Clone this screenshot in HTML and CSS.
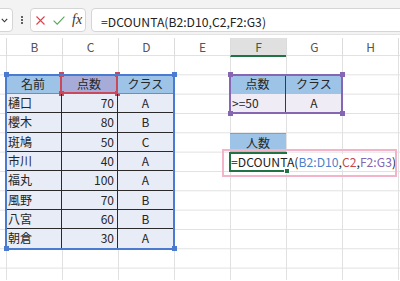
FILE: index.html
```html
<!DOCTYPE html>
<html>
<head>
<meta charset="utf-8">
<link rel="stylesheet" href="styles.css">
</head>
<body>
<div class="topbar">
  <div class="namebox">
    <svg width="7" height="5" viewBox="0 0 7 5"><path d="M0.8 0.8 L3.5 3.8 L6.2 0.8" fill="none" stroke="#333" stroke-width="1.1"/></svg>
  </div>
  <div class="dots"><i></i><i></i><i></i></div>
  <div class="btns">
    <svg class="xicon" width="9" height="9" viewBox="0 0 9 9"><path d="M0.5 0.5 L8.5 8.5 M8.5 0.5 L0.5 8.5" stroke="#d9434c" stroke-width="1.1" fill="none"/></svg>
    <svg class="check" width="12" height="9" viewBox="0 0 12 9"><path d="M0.6 4.6 L4.2 8.2 L11.4 0.6" stroke="#57a85a" stroke-width="1.1" fill="none"/></svg>
    <span class="fx">fx</span>
  </div>
  <div class="formula"><span class="ftext">=DCOUNTA(B2:D10,C2,F2:G3)</span></div>
</div>
<div class="colheads">
  <div class="ch first"></div>
  <div class="ch">B</div>
  <div class="ch">C</div>
  <div class="ch">D</div>
  <div class="ch">E</div>
  <div class="ch sel">F</div>
  <div class="ch">G</div>
  <div class="ch">H</div>
  <div class="ch"></div>
</div>
<div class="sheet">
  <div class="data">
    <div class="c h">名前</div>
    <div class="c h sel-c2">点数<span class="frame red"><i class="tl"></i><i class="tr"></i><i class="bl"></i><i class="br"></i></span></div>
    <div class="c h">クラス</div>
    <div class="c">樋口</div><div class="c num">70</div><div class="c mid">A</div>
    <div class="c">櫻木</div><div class="c num">80</div><div class="c mid">B</div>
    <div class="c">斑鳩</div><div class="c num">50</div><div class="c mid">C</div>
    <div class="c">市川</div><div class="c num">40</div><div class="c mid">A</div>
    <div class="c">福丸</div><div class="c num">100</div><div class="c mid">A</div>
    <div class="c">風野</div><div class="c num">70</div><div class="c mid">B</div>
    <div class="c">八宮</div><div class="c num">60</div><div class="c mid">B</div>
    <div class="c">朝倉</div><div class="c num">30</div><div class="c mid">A</div>
    <span class="frame blue"><i class="tl"></i><i class="tr"></i><i class="bl"></i><i class="br"></i></span>
  </div>
  <div class="crit">
    <div class="k h">点数</div>
    <div class="k h">クラス</div>
    <div class="k v">&gt;=50</div>
    <div class="k v mid">A</div>
    <span class="frame purple"><i class="tl"></i><i class="tr"></i><i class="bl"></i><i class="br"></i></span>
  </div>
  <div class="count">人数</div>
  <div class="edit">
    <span class="active"></span>
    <div class="etext"><span class="ftext">=DCOUNTA(<span class="r1">B2:D10</span>,<span class="r2">C2</span>,<span class="r3">F2:G3</span>)</span></div>
    <span class="handle"></span>
    <span class="pink"></span>
  </div>
</div>
</body>
</html>
```

FILE: styles.css
```css
html, body {
  margin: 0;
  padding: 0;
}
body {
  width: 400px;
  height: 281px;
  overflow: hidden;
  background: #ffffff;
  font-family: "Noto Sans CJK JP", "Noto Sans", sans-serif;
  color: #262626;
}

.ftext {
  font-family: "Noto Sans CJK JP", sans-serif;
  font-size: 12.2px;
  color: #222;
  white-space: nowrap;
}

/* ---------- formula bar ---------- */
.topbar {
  display: flex;
  align-items: flex-start;
  height: 35px;
  box-sizing: border-box;
  padding-top: 8px;
  background: #f3f3f3;
  border-bottom: 1px solid #e4e4e4;
}
.namebox {
  box-sizing: border-box;
  width: 22px;
  height: 24px;
  margin-left: -9px;
  background: #fff;
  border: 1px solid #d5d5d5;
  border-radius: 4px;
  display: flex;
  align-items: center;
  justify-content: flex-end;
  padding-right: 4px;
}
.dots {
  margin-left: 8px;
  width: 2px;
  height: 24px;
  display: flex;
  flex-direction: column;
  justify-content: center;
  gap: 1.5px;
}
.dots i {
  display: block;
  width: 1.6px;
  height: 1.6px;
  background: #444;
  border-radius: 50%;
}
.btns {
  box-sizing: border-box;
  margin-left: 7px;
  width: 56px;
  height: 24px;
  background: #fff;
  border: 1px solid #d5d5d5;
  border-radius: 4px;
  display: flex;
  align-items: center;
}
.xicon { margin-left: 5px; }
.check { margin-left: 8px; }
.fx {
  margin-left: 7px;
  font-family: "Liberation Serif", "DejaVu Serif", serif;
  font-style: italic;
  font-size: 14px;
  color: #333;
  line-height: 20px;
}
.formula {
  box-sizing: border-box;
  flex: 1;
  margin-left: 5px;
  margin-right: -10px;
  height: 24px;
  background: #fff;
  border: 1px solid #d5d5d5;
  border-radius: 4px;
  padding-left: 9px;
  line-height: 22px;
  overflow: hidden;
}

/* ---------- column headers ---------- */
.colheads {
  display: grid;
  grid-template-columns: 6px repeat(7, 56px) 1fr;
  height: 20.4px;
  font-size: 12px;
  color: #555;
  text-align: center;
}
.ch {
  border-left: 1px solid #dcdcdc;
  margin-top: 3px;
  line-height: 17px;
}
.ch.first { border-left: none; }
.ch.sel {
  background: #e0e0e0;
  border-bottom: 2px solid #217346;
  color: #1f6b42;
}

/* ---------- grid ---------- */
.sheet {
  display: grid;
  grid-template-columns: 6px repeat(7, 56px) 1fr;
  grid-template-rows: repeat(12, 19.33px);
  height: 225px;
  overflow: hidden;
  background-image:
    linear-gradient(to right, #e1e1e1 1px, transparent 1px),
    linear-gradient(to bottom, #e1e1e1 1px, transparent 1px);
  background-size: 56px 100%, 100% 19.33px;
  background-position: 6px 0, 0 0;
  font-size: 12px;
}

.data {
  grid-column: 2 / 5;
  grid-row: 2 / 11;
  position: relative;
  display: grid;
  grid-template-columns: repeat(3, 56px);
  grid-template-rows: repeat(9, 19.33px);
  background: #e8ecf6;
}
.c {
  box-sizing: border-box;
  border-right: 1px solid #2a2a2a;
  border-bottom: 1px solid #2a2a2a;
  padding: 0 3px 0 2px;
  line-height: 18px;
  white-space: nowrap;
  position: relative;
}
.c:nth-child(3n) { border-right: none; }
.c:nth-last-child(-n+4) { border-bottom: none; }
.c.h {
  background: #9dc3e6;
  text-align: center;
  border-bottom-color: #6c8fb8;
}
.c.sel-c2 { background: #a6abd8; }
.c.num { text-align: right; }
.c.mid { text-align: center; }

.frame {
  position: absolute;
  left: -1px;
  top: -1px;
  right: -1px;
  bottom: -1px;
  border: 2px solid var(--fc);
  pointer-events: none;
}
.frame.blue { --fc: #4a7bd0; }
.frame.red { --fc: #c9485a; left: -2px; }
.frame.purple { --fc: #8566b3; }
.frame i {
  position: absolute;
  width: 5px;
  height: 5px;
  background: var(--fc);
}
.frame i.tl { left: -3.5px; top: -3.5px; }
.frame i.tr { right: -3.5px; top: -3.5px; }
.frame i.bl { left: -3.5px; bottom: -3.5px; }
.frame i.br { right: -3.5px; bottom: -3.5px; }

.crit {
  grid-column: 6 / 8;
  grid-row: 2 / 4;
  position: relative;
  display: grid;
  grid-template-columns: repeat(2, 56px);
  grid-template-rows: repeat(2, 19.33px);
}
.k {
  box-sizing: border-box;
  line-height: 18px;
  padding: 0 2px;
  white-space: nowrap;
}
.k:nth-child(odd) { border-right: 1px solid #3a3a3a; }
.k.h { background: #9dc3e6; text-align: center; }
.k.v { background: #f0ecf6; }
.k.mid { text-align: center; }

.count {
  grid-column: 6;
  grid-row: 5;
  background: #9dc3e6;
  text-align: center;
  line-height: 18px;
  border-top: 1px solid #7f9fcb;
  box-sizing: border-box;
}

.edit {
  grid-column: 6 / 9;
  grid-row: 6;
  position: relative;
  display: flex;
}
.active {
  position: absolute;
  left: -1px;
  top: 0;
  width: 58px;
  bottom: -1px;
  box-sizing: border-box;
  border: 2px solid #217346;
}
.etext {
  position: relative;
  margin: 2px 1px 1px 1px;
  flex: 1;
  background: #fff;
  line-height: 16px;
  white-space: nowrap;
}
.r1 { color: #4f7fcb; }
.r2 { color: #c8484f; }
.r3 { color: #8566b3; }
.handle {
  position: absolute;
  left: 54px;
  bottom: -3px;
  width: 4px;
  height: 4px;
  background: #217346;
  border: 1px solid #fff;
}
.pink {
  position: absolute;
  left: -8px;
  top: -3px;
  right: 1px;
  bottom: -6px;
  border: 2.5px solid #f3b4c9;
  pointer-events: none;
}
```
